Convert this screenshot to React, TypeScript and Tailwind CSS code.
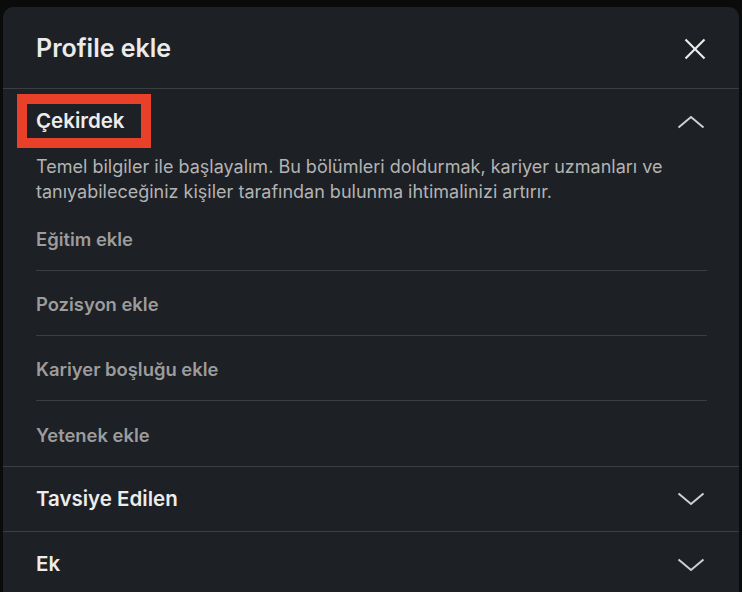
import React from "react";

const items = ["Eğitim ekle", "Pozisyon ekle", "Kariyer boşluğu ekle", "Yetenek ekle"];

function Chevron({ up }: { up?: boolean }) {
  return (
    <svg width="28" height="14" viewBox="0 0 28 14" fill="none" className={up ? "" : "rotate-180"}>
      <polyline points="1.5,12.5 14,2 26.5,12.5" stroke="#d0d0d0" strokeWidth="2" />
    </svg>
  );
}

export default function App() {
  return (
    <div className="h-[592px] overflow-hidden bg-[#0b0b0c] px-[3px] pt-[7px] font-['Inter',sans-serif]">
      <div className="h-[600px] rounded-t-[10px] bg-[#1d2025]">
        <header className="flex h-[82px] items-center justify-between border-b border-[#3b3e43] pl-[33px] pr-[32px] pt-[2px]">
          <h2 className="text-[25px] font-semibold text-[#ebebeb]">Profile ekle</h2>
          <button className="flex h-6 w-6 items-center justify-center">
            <svg width="22" height="22" viewBox="0 0 22 22" fill="none">
              <line x1="1.5" y1="1.5" x2="20.5" y2="20.5" stroke="#ececec" strokeWidth="2.2" />
              <line x1="20.5" y1="1.5" x2="1.5" y2="20.5" stroke="#ececec" strokeWidth="2.2" />
            </svg>
          </button>
        </header>

        <section className="border-b border-[#3b3e43]">
          <div className="relative flex h-[65px] items-center justify-between pl-[33px] pr-[34px]">
            <h3 className="text-[20.5px] font-semibold text-[#ececec]">Çekirdek</h3>
            <div className="absolute left-[14px] top-[5px] h-[54px] w-[134px] border-[10px] border-[#e9402a]"></div>
            <Chevron up />
          </div>
          <p className="px-[33px] pb-[2px] text-[18px] leading-[25px] text-[#b3b3b3]">
            Temel bilgiler ile başlayalım. Bu bölümleri doldurmak, kariyer uzmanları ve tanıyabileceğiniz kişiler
            tarafından bulunma ihtimalinizi artırır.
          </p>
          <ul className="ml-[33px] mr-[32px]">
            {items.map((t, i) => (
              <li
                key={t}
                className={`flex h-[65px] items-center pt-[4px] text-[18.4px] font-semibold text-[#9c9c9c] ${
                  i < items.length - 1 ? "border-b border-[#3b3e43]" : ""
                }`}
              >
                {t}
              </li>
            ))}
          </ul>
        </section>

        <section className="flex h-[65px] items-center justify-between border-b border-[#3b3e43] pl-[33px] pr-[34px]">
          <h3 className="text-[20.5px] font-semibold text-[#ececec]">Tavsiye Edilen</h3>
          <Chevron />
        </section>
        <section className="flex h-[65px] items-center justify-between pl-[33px] pr-[34px]">
          <h3 className="text-[20.5px] font-semibold text-[#ececec]">Ek</h3>
          <Chevron />
        </section>
      </div>
    </div>
  );
}
